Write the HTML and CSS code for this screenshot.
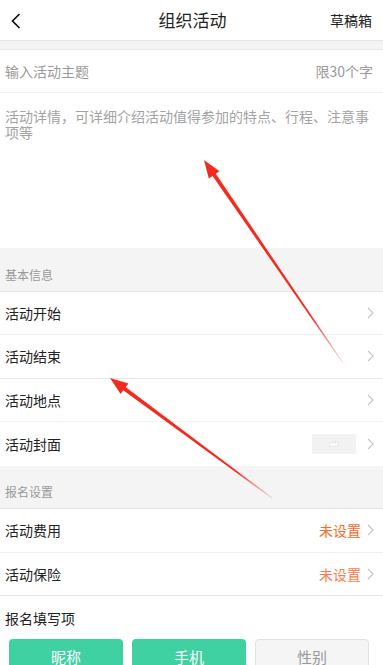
FILE: index.html
```html
<!DOCTYPE html>
<html lang="zh">
<head>
<meta charset="utf-8">
<title>组织活动</title>
<link rel="stylesheet" href="styles.css">
</head>
<body>
<div class="page">
  <header class="topbar">
    <svg class="back" width="10" height="16" viewBox="0 0 10 16"><polyline points="8.5,1 1.5,8 8.5,15" fill="none" stroke="#111" stroke-width="1.7"/></svg>
    <div class="title">组织活动</div>
    <div class="drafts">草稿箱</div>
  </header>
  <div class="spacer"></div>
  <div class="topic">
    <span>输入活动主题</span>
    <span>限30个字</span>
  </div>
  <div class="detail">活动详情，可详细介绍活动值得参加的特点、行程、注意事项等</div>

  <div class="section-label">基本信息</div>
  <div class="row"><span class="label">活动开始</span><span class="right"><svg class="chev" width="7" height="12" viewBox="0 0 7 12"><polyline points="1,1 6,6 1,11" fill="none" stroke="#c4c4c4" stroke-width="1.1"/></svg></span></div>
  <div class="row row-strong"><span class="label">活动结束</span><span class="right"><svg class="chev" width="7" height="12" viewBox="0 0 7 12"><polyline points="1,1 6,6 1,11" fill="none" stroke="#c4c4c4" stroke-width="1.1"/></svg></span></div>
  <div class="row"><span class="label">活动地点</span><span class="right"><svg class="chev" width="7" height="12" viewBox="0 0 7 12"><polyline points="1,1 6,6 1,11" fill="none" stroke="#c4c4c4" stroke-width="1.1"/></svg></span></div>
  <div class="row row-last"><span class="label">活动封面</span><span class="right"><span class="thumb"><svg width="10" height="6" viewBox="0 0 10 6"><rect x="0.5" y="1" width="9" height="4.5" rx="2" fill="#fafafa" stroke="#e2e2e2" stroke-width="0.8"/><rect x="3" y="0.3" width="1" height="2" fill="#e2e2e2"/><rect x="6" y="0.3" width="1" height="2" fill="#e2e2e2"/></svg></span><svg class="chev" width="7" height="12" viewBox="0 0 7 12"><polyline points="1,1 6,6 1,11" fill="none" stroke="#c4c4c4" stroke-width="1.1"/></svg></span></div>

  <div class="section-label">报名设置</div>
  <div class="row"><span class="label">活动费用</span><span class="right"><span class="unset">未设置</span><svg class="chev" width="7" height="12" viewBox="0 0 7 12"><polyline points="1,1 6,6 1,11" fill="none" stroke="#c4c4c4" stroke-width="1.1"/></svg></span></div>
  <div class="row row-strong"><span class="label">活动保险</span><span class="right"><span class="unset unset-light">未设置</span><svg class="chev" width="7" height="12" viewBox="0 0 7 12"><polyline points="1,1 6,6 1,11" fill="none" stroke="#c4c4c4" stroke-width="1.1"/></svg></span></div>

  <div class="fields-title">报名填写项</div>
  <div class="fields">
    <div class="field on">昵称</div>
    <div class="field on">手机</div>
    <div class="field off">性别</div>
  </div>

  <svg class="marks" width="383" height="665" viewBox="0 0 383 665">
    <defs>
      <linearGradient id="g1" gradientUnits="userSpaceOnUse" x1="211" y1="171" x2="343" y2="363">
        <stop offset="0" stop-color="#f52a1e"/>
        <stop offset="0.75" stop-color="#f52a1e"/>
        <stop offset="1" stop-color="#f52a1e" stop-opacity="0.15"/>
      </linearGradient>
      <linearGradient id="g2" gradientUnits="userSpaceOnUse" x1="121" y1="386" x2="272" y2="498">
        <stop offset="0" stop-color="#f52a1e"/>
        <stop offset="0.75" stop-color="#f52a1e"/>
        <stop offset="1" stop-color="#f52a1e" stop-opacity="0.15"/>
      </linearGradient>
    </defs>
    <polygon points="213.6,170.5 343.4,362.7 342.6,363.3 210.3,172.7" fill="url(#g1)"/>
    <polygon points="204,160 208.8,178.5 219.5,171.2" fill="#f52a1e"/>
    <polygon points="122.5,384.7 272.3,497.6 271.7,498.4 120.1,387.9" fill="url(#g2)"/>
    <polygon points="110,378 120.6,393.9 128.4,383.5" fill="#f52a1e"/>
  </svg>
</div>
</body>
</html>
```

FILE: styles.css
```css
* { box-sizing: border-box; }
html, body {
  margin: 0;
  padding: 0;
  background: #fff;
}
body {
  font-family: "Noto Sans CJK SC", "Noto Sans", sans-serif;
  color: #222;
  width: 383px;
  height: 665px;
  overflow: hidden;
}
.page {
  position: relative;
  width: 383px;
  height: 665px;
  overflow: hidden;
}
.topbar {
  height: 41px;
  border-bottom: 1px solid #e4e4e4;
  display: grid;
  grid-template-columns: 1fr auto 1fr;
  align-items: center;
  padding: 0 11px;
}
.back { display: block; margin-top: 1px; }
.title {
  font-size: 17px;
  line-height: 20px;
  color: #222;
  padding-left: 2px;
}
.drafts {
  justify-self: end;
  font-size: 14px;
  line-height: 20px;
  color: #222;
}
.spacer {
  height: 9px;
  background: #f4f4f4;
  border-bottom: 1px solid #e8e8e8;
}
.topic {
  height: 43px;
  border-bottom: 1px solid #f2f2f2;
  display: flex;
  align-items: center;
  justify-content: space-between;
  padding: 0 10px 0 5px;
  font-size: 14px;
  line-height: 20px;
  color: #9a9a9a;
}
.detail {
  height: 155px;
  padding: 15px 5px 0 5px;
  font-size: 14px;
  line-height: 16px;
  color: #a3a3a3;
}
.section-label {
  height: 43.5px;
  background: #f4f4f4;
  border-bottom: 1px solid #e4e4e4;
  display: flex;
  align-items: center;
  padding: 11px 0 0 5px;
  font-size: 12px;
  line-height: 16px;
  color: #999;
}
.row {
  height: 43.5px;
  border-bottom: 1px solid #f2f2f2;
  display: flex;
  align-items: center;
  justify-content: space-between;
  padding: 0 9px 0 5px;
}
.row-strong { border-bottom-color: #e6e6e6; }
.row-last { border-bottom: none; }
.label {
  font-size: 14px;
  line-height: 20px;
  color: #222;
}
.right {
  display: flex;
  align-items: center;
}
.chev { display: block; }
.thumb {
  width: 44px;
  height: 20px;
  background: #f2f2f2;
  margin-right: 11px;
  display: flex;
  align-items: center;
  justify-content: center;
}
.thumb svg { display: block; }
.unset {
  font-size: 14px;
  line-height: 20px;
  color: #fa6a1f;
  margin-right: 6px;
}
.unset-light { color: #fb7c4a; }
.fields-title {
  height: 43px;
  display: flex;
  align-items: center;
  padding-left: 5px;
  font-size: 14px;
  line-height: 20px;
  color: #222;
}
.fields {
  display: grid;
  grid-template-columns: repeat(3, 114px);
  gap: 9px;
  padding-left: 9px;
}
.field {
  height: 36px;
  border-radius: 4px;
  display: flex;
  align-items: center;
  justify-content: center;
  font-size: 15px;
  line-height: 20px;
}
.field.on {
  background: #40d1a2;
  color: #fff;
}
.field.off {
  background: #f5f5f5;
  border: 1px solid #e2e2e2;
  color: #999;
}
.marks {
  position: absolute;
  left: 0;
  top: 0;
  pointer-events: none;
}
```
